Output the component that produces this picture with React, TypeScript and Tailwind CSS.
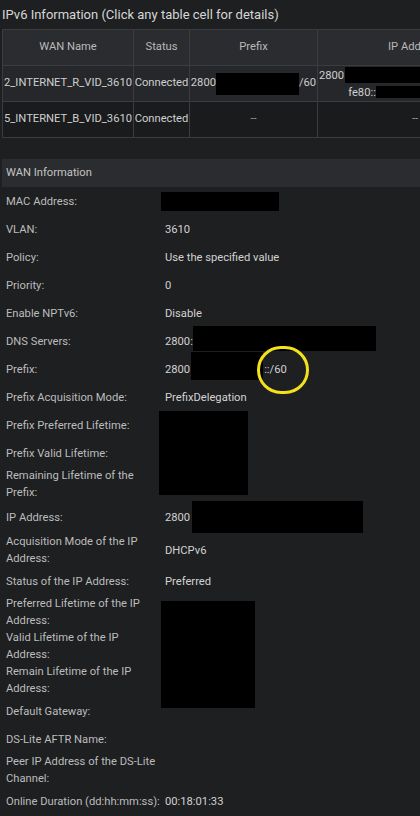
import React from 'react';

// Router status page: IPv6 table + WAN details (values partly redacted)

const Redact: React.FC<{ className?: string }> = ({ className = '' }) => (
  <span className={`inline-block bg-black ${className}`} />
);

type Row = {
  label: string;
  value?: React.ReactNode;
};

const rows: Row[] = [
  { label: 'MAC Address:', value: <Redact className="w-[118px] h-[19px] -ml-[4px]" /> },
  { label: 'VLAN:', value: '3610' },
  { label: 'Policy:', value: 'Use the specified value' },
  { label: 'Priority:', value: '0' },
  { label: 'Enable NPTv6:', value: 'Disable' },
  {
    label: 'DNS Servers:',
    value: (
      <span className="flex items-center">
        2800:
        <Redact className="w-[183px] h-[25px] -translate-y-[3px]" />
      </span>
    ),
  },
  {
    label: 'Prefix:',
    value: (
      <span className="flex items-center">
        2800
        <Redact className="w-[72px] h-[28px] ml-[1px] -translate-y-[3px]" />
        <span className="ml-[1px]">::/60</span>
        {/* highlight ring drawn on the screenshot */}
        <span className="absolute left-[97px] -top-[9px] w-[52px] h-[48px] rounded-full border-[3px] border-[#f3e21b]" />
      </span>
    ),
  },
  { label: 'Prefix Acquisition Mode:', value: 'PrefixDelegation' },
  {
    label: 'Prefix Preferred Lifetime:',
    value: <span className="absolute -left-[1px] top-0 w-[89px] h-[84px] bg-black" />,
  },
  { label: 'Prefix Valid Lifetime:' },
  { label: 'Remaining Lifetime of the Prefix:' },
  {
    label: 'IP Address:',
    value: (
      <span className="flex items-center">
        2800
        <Redact className="w-[171px] h-[32px] ml-[2px]" />
      </span>
    ),
  },
  { label: 'Acquisition Mode of the IP Address:', value: 'DHCPv6' },
  { label: 'Status of the IP Address:', value: 'Preferred' },
  {
    label: 'Preferred Lifetime of the IP Address:',
    value: <span className="absolute left-[1px] top-[6px] w-[94px] h-[107px] bg-black" />,
  },
  { label: 'Valid Lifetime of the IP Address:' },
  { label: 'Remain Lifetime of the IP Address:' },
  { label: 'Default Gateway:' },
  { label: 'DS-Lite AFTR Name:' },
  { label: 'Peer IP Address of the DS-Lite Channel:' },
  { label: 'Online Duration (dd:hh:mm:ss):', value: '00:18:01:33' },
];

export default function App() {
  return (
    <div className="w-[420px] h-[816px] overflow-hidden bg-[#1e1f21] text-[#cfcfcf] font-['Roboto','Liberation_Sans',sans-serif]">
      <div className="h-[29px] pl-[2px] flex items-center text-[13px] text-[#d6d6d6]">
        IPv6 Information (Click any table cell for details)
      </div>

      <table className="ml-[2px] w-[510px] table-fixed border-collapse text-[11.2px] text-center">
        <colgroup>
          <col className="w-[131px]" />
          <col className="w-[56px]" />
          <col className="w-[128px]" />
          <col className="w-[195px]" />
        </colgroup>
        <thead>
          <tr className="h-[36px] bg-[#2a2c2f] text-[#b9b9b9]">
            <th className="font-normal border border-[#3a3c40]">WAN Name</th>
            <th className="font-normal border border-[#3a3c40]">Status</th>
            <th className="font-normal border border-[#3a3c40]">Prefix</th>
            <th className="font-normal border border-[#3a3c40]">IP Address</th>
          </tr>
        </thead>
        <tbody>
          <tr className="h-[36px] bg-[#25272a]">
            <td className="border border-[#3a3c40] px-0 whitespace-nowrap">2_INTERNET_R_VID_3610</td>
            <td className="border border-[#3a3c40] px-0">Connected</td>
            <td className="border border-[#3a3c40] px-0">
              <span className="flex items-center justify-center">
                2800
                <Redact className="w-[83px] h-[22px]" />
                /60
              </span>
            </td>
            <td className="border border-[#3a3c40] px-0 leading-[17px]">
              <div className="flex items-center pl-[1px]">
                2800
                <Redact className="w-[164px] h-[16px] ml-[1px]" />
              </div>
              <div className="flex items-center justify-center">
                fe80::
                <Redact className="w-[106px] h-[12px]" />
              </div>
            </td>
          </tr>
          <tr className="h-[36px] bg-[#1a1b1d]">
            <td className="border border-[#3a3c40] px-0 whitespace-nowrap">5_INTERNET_B_VID_3610</td>
            <td className="border border-[#3a3c40] px-0">Connected</td>
            <td className="border border-[#3a3c40] px-0 text-[#9a9a9a]">--</td>
            <td className="border border-[#3a3c40] px-0 text-[#9a9a9a]">--</td>
          </tr>
        </tbody>
      </table>

      <div className="mt-[21px] ml-[2px] h-[28px] bg-[#2a2c2f] flex items-center pl-[4px] text-[11.2px] text-[#c4c4c4]">
        WAN Information
      </div>

      <div className="text-[11.2px] leading-[17px]">
        {rows.map((r) => (
          <div key={r.label} className="flex items-center min-h-[28px]">
            <div className="w-[160px] pl-[6px] shrink-0 text-[#bcbcbc]">{r.label}</div>
            <div className="relative pl-[5px] text-[#d2d2d2] flex-1 self-stretch flex items-center">
              {r.value}
            </div>
          </div>
        ))}
      </div>
    </div>
  );
}
